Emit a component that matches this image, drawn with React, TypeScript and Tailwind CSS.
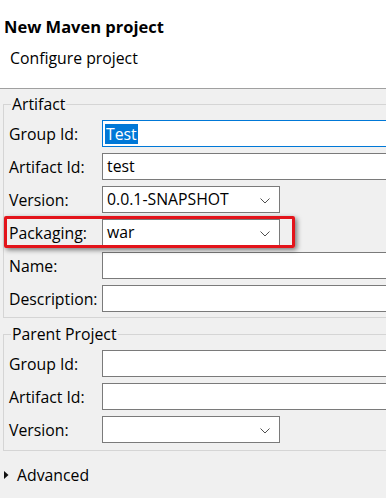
import React from "react";

const font = { fontFamily: '"Open Sans", "Noto Sans", "Noto Sans CJK SC", sans-serif' };

function Chevron() {
  return (
    <svg width="10" height="6" viewBox="0 0 10 6" className="absolute right-[9px] top-[11px]">
      <polyline points="0.5,0.5 5,5 9.5,0.5" fill="none" stroke="#505050" strokeWidth="1" />
    </svg>
  );
}

function Row({ label, children }: { label: string; children: React.ReactNode }) {
  return (
    <div className="flex h-[27px] items-center">
      <div className="w-[93px] shrink-0 text-[15.8px] leading-[20px] text-black">{label}</div>
      {children}
    </div>
  );
}

function TextBox({ value }: { value?: string }) {
  return (
    <div className="flex h-[27px] w-[330px] items-center border border-[#7a7a7a] bg-white pl-[4px] text-[15.8px] text-black">
      {value}
    </div>
  );
}

function Combo({ value }: { value?: string }) {
  return (
    <div className="relative flex h-[27px] w-[178px] items-center border border-[#7a7a7a] bg-white pl-[4px] text-[15.8px] text-black">
      {value}
      <Chevron />
    </div>
  );
}

export default function App() {
  return (
    <div className="relative h-[498px] w-[386px] overflow-hidden bg-[#f0f0f0]" style={font}>
      <div className="h-[89px] border-b border-[#a0a0a0] bg-white">
        <div className="pl-[4px] pt-[16px] text-[16.5px] font-bold leading-[22px] text-black">New Maven project</div>
        <div className="pl-[10px] pt-[10px] text-[15.8px] leading-[20px] text-black">Configure project</div>
      </div>

      <fieldset className="ml-[3px] mt-[5px] w-[440px] border border-[#d5d5d5] pb-[5px] pl-[5px] pt-[6px]">
        <legend className="ml-[2px] px-[1px] text-[15.8px] leading-[20px] text-black">Artifact</legend>
        <div className="flex flex-col gap-[6px]">
          <Row label="Group Id:">
            <div className="flex h-[27px] w-[330px] items-center border border-[#0078d7] bg-white pl-[2px] text-[15.8px]">
              <span className="bg-[#0078d7] px-[1px] leading-[20px] text-white">Test</span>
            </div>
          </Row>
          <Row label="Artifact Id:">
            <TextBox value="test" />
          </Row>
          <Row label="Version:">
            <Combo value="0.0.1-SNAPSHOT" />
          </Row>
          <div className="relative">
            <Row label="Packaging:">
              <Combo value="war" />
            </Row>
            <div className="pointer-events-none absolute left-[-5px] top-[-3px] h-[32px] w-[291px] rounded-[2px] border-[3px] border-[#e3141b] shadow-[2px_2px_5px_rgba(0,0,0,0.5)]" />
          </div>
          <Row label="Name:">
            <TextBox />
          </Row>
          <Row label="Description:">
            <TextBox />
          </Row>
        </div>
      </fieldset>

      <fieldset className="ml-[3px] mt-[6px] w-[440px] border border-[#d5d5d5] pb-[7px] pl-[5px] pt-[6px]">
        <legend className="ml-[2px] px-[1px] text-[15.8px] leading-[20px] text-black">Parent Project</legend>
        <div className="flex flex-col gap-[6px]">
          <Row label="Group Id:">
            <TextBox />
          </Row>
          <Row label="Artifact Id:">
            <TextBox />
          </Row>
          <Row label="Version:">
            <Combo />
          </Row>
        </div>
      </fieldset>

      <div className="mt-[14px] flex items-center pl-[4px]">
        <svg width="5" height="8" viewBox="0 0 5 8" className="mr-[8px]">
          <polygon points="0,0 4.5,4 0,8" fill="#111" />
        </svg>
        <span className="text-[15.8px] leading-[20px] text-black">Advanced</span>
      </div>
    </div>
  );
}
